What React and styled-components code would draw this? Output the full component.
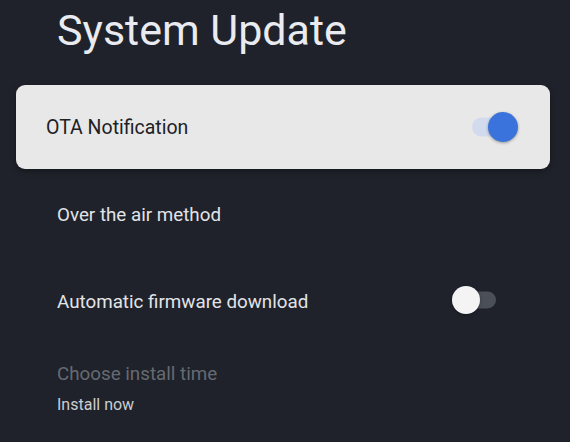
import React from 'react';
import styled, { createGlobalStyle } from 'styled-components';

const GlobalStyle = createGlobalStyle`
  html, body {
    margin: 0;
    padding: 0;
    background: #1f222a;
  }
  body {
    font-family: Roboto, 'Noto Sans', 'Liberation Sans', sans-serif;
  }
`;

const StyledPage = styled.div`
  width: 570px;
  height: 442px;
  overflow: hidden;
  background: #1f222a;
  padding: 4px 20px 0 16px;
  box-sizing: border-box;
`;

const StyledTitle = styled.h1`
  margin: 0 0 29px 41px;
  font-size: 43px;
  line-height: 52px;
  font-weight: 400;
  color: #e9ebf0;
`;

const StyledList = styled.div`
  display: flex;
  flex-direction: column;
`;

const StyledFocusedRow = styled.div`
  display: flex;
  align-items: center;
  justify-content: space-between;
  height: 84px;
  padding: 0 32px 0 30px;
  background: #e8e8e8;
  border-radius: 9px;
  box-shadow: 0 2px 6px rgba(0, 0, 0, 0.35);
  margin-bottom: 2px;
`;

const StyledRow = styled.div`
  display: flex;
  align-items: center;
  justify-content: space-between;
  height: 87px;
  padding: 0 54px 0 41px;
`;

const StyledRowLabel = styled.span`
  font-size: ${({ focused }) => (focused ? '19.5px' : '18.8px')};
  color: ${({ focused }) => (focused ? '#202124' : '#e2e4e8')};
`;

const StyledStackRow = styled.div`
  display: flex;
  flex-direction: column;
  padding: 18px 54px 0 41px;
  gap: 9px;
`;

const StyledDisabledLabel = styled.span`
  font-size: 18.8px;
  line-height: 23px;
  color: #666a71;
`;

const StyledSubLabel = styled.span`
  font-size: 16px;
  line-height: 20px;
  color: #cbcdd2;
`;

const StyledSwitch = styled.div`
  position: relative;
  flex: none;
  width: ${({ on }) => (on ? '46px' : '44px')};
  height: ${({ on }) => (on ? '30px' : '28px')};
  margin-bottom: ${({ on }) => (on ? '0' : '3px')};
`;

const StyledTrack = styled.div`
  position: absolute;
  top: 50%;
  transform: translateY(-50%);
  left: ${({ on }) => (on ? '0' : '6px')};
  width: ${({ on }) => (on ? '40px' : '38px')};
  height: ${({ on }) => (on ? '19px' : '17px')};
  border-radius: 10px;
  background: ${({ on }) => (on ? '#d2dbee' : '#4b4f57')};
`;

const StyledKnob = styled.div`
  position: absolute;
  top: 0;
  ${({ on }) => (on ? 'right: 0;' : 'left: 0;')}
  width: ${({ on }) => (on ? '30px' : '28px')};
  height: ${({ on }) => (on ? '30px' : '28px')};
  border-radius: 50%;
  background: ${({ on }) => (on ? '#3a73db' : '#f4f4f5')};
  box-shadow: 0 1px 3px rgba(0, 0, 0, 0.35);
`;

const Switch = ({ on }) => (
  <StyledSwitch on={on ? 1 : 0}>
    <StyledTrack on={on ? 1 : 0} />
    <StyledKnob on={on ? 1 : 0} />
  </StyledSwitch>
);

const App = () => (
  <>
    <GlobalStyle />
    <StyledPage>
      <StyledTitle>System Update</StyledTitle>
      <StyledList>
        <StyledFocusedRow>
          <StyledRowLabel focused={1}>OTA Notification</StyledRowLabel>
          <Switch on />
        </StyledFocusedRow>
        <StyledRow>
          <StyledRowLabel>Over the air method</StyledRowLabel>
        </StyledRow>
        <StyledRow>
          <StyledRowLabel>Automatic firmware download</StyledRowLabel>
          <Switch on={false} />
        </StyledRow>
        <StyledStackRow>
          <StyledDisabledLabel>Choose install time</StyledDisabledLabel>
          <StyledSubLabel>Install now</StyledSubLabel>
        </StyledStackRow>
      </StyledList>
    </StyledPage>
  </>
);

export default App;
